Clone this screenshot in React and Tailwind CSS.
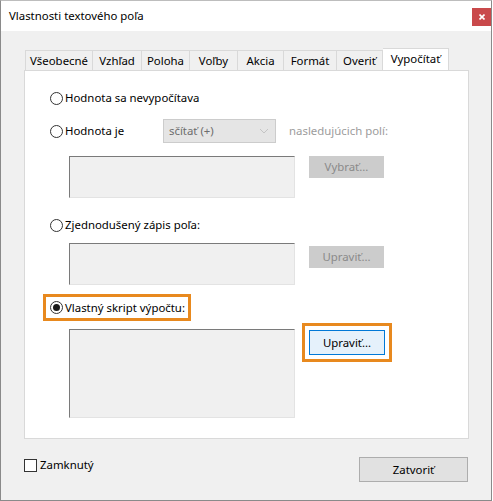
import React from "react";

const TABS = [
  { label: "Všeobecné", w: "w-[68px]" },
  { label: "Vzhľad", w: "w-[49px]" },
  { label: "Poloha", w: "w-[48px]" },
  { label: "Voľby", w: "w-[48px]" },
  { label: "Akcia", w: "w-[46px]" },
  { label: "Formát", w: "w-[53px]" },
  { label: "Overiť", w: "w-[46px]" },
];

const Radio = ({ checked }) => (
  <span className="flex h-[13px] w-[13px] shrink-0 items-center justify-center rounded-full border border-[#333] bg-white">
    {checked && <span className="h-[7px] w-[7px] rounded-full bg-[#1a1a1a]" />}
  </span>
);

const Sunken = ({ h }) => (
  <div
    className={`w-[226px] ${h} shrink-0 border-t border-l border-r border-b border-t-[#7a7a7a] border-l-[#7a7a7a] border-r-[#e3e3e3] border-b-[#e3e3e3] bg-[#f0f0f0]`}
  />
);

const DisabledButton = ({ children }) => (
  <div className="flex h-[22px] w-[75px] items-center justify-center bg-[#cccccc] text-[#8a8a8a]">
    {children}
  </div>
);

const App = () => {
  return (
    <div
      className="h-[501px] w-[493px] overflow-hidden whitespace-nowrap bg-white text-[11.4px] text-black"
      style={{ fontFamily: '"Segoe UI", "Noto Sans", sans-serif' }}
    >
      <div className="flex h-[501px] w-[492px] flex-col border border-[#8a8a8a] border-t-[#bdbdbd] bg-[#f0f0f0]">
        {/* Title bar */}
        <div className="flex h-[30px] shrink-0 items-start justify-between bg-white">
          <span className="mt-[6px] pl-[8px]">Vlastnosti textového poľa</span>
          <div className="mt-[7px] flex h-[18px] w-[19px] items-center justify-center bg-[#c9494b]">
            <svg width="6" height="6" viewBox="0 0 6 6">
              <path d="M0.5 0.5L5.5 5.5M5.5 0.5L0.5 5.5" stroke="#fff" strokeWidth="1.6" />
            </svg>
          </div>
        </div>

        {/* Body */}
        <div className="flex flex-col pl-[23px] pr-[23px]">
          {/* Tabs */}
          <div className="mt-[17px] flex h-[22px] items-end pl-[1px]">
            {TABS.map((t) => (
              <div
                key={t.label}
                className={`${t.w} flex h-[20px] shrink-0 items-center justify-center border border-b-0 border-l-0 border-[#d9d9d9] bg-[#f0f0f0] first:border-l`}
              >
                {t.label}
              </div>
            ))}
            <div className="-mb-[1px] flex h-[23px] w-[66px] shrink-0 items-start justify-center border border-b-0 border-l-0 border-[#d9d9d9] bg-white pt-[1px]">
              Vypočítať
            </div>
          </div>

          {/* Panel */}
          <div className="flex h-[369px] w-[445px] flex-col border border-[#d9d9d9] bg-white">
            <div className="mt-[19px] flex h-[16px] items-center gap-[2px] pl-[25px]">
              <Radio />
              <span>Hodnota sa nevypočítava</span>
            </div>

            <div className="mt-[13px] flex h-[24px] items-center pl-[25px]">
              <Radio />
              <span className="ml-[2px] w-[98px]">Hodnota je</span>
              <div className="flex h-[24px] w-[113px] items-center border border-[#cccccc] bg-[#e5e5e5]">
                <span className="ml-[5px] flex-1 text-[#6d6d6d]">sčítať (+)</span>
                <svg width="10" height="6" viewBox="0 0 10 6" className="mr-[6px]">
                  <path d="M1 1L5 5L9 1" fill="none" stroke="#c4c4c4" strokeWidth="1" />
                </svg>
              </div>
              <span className="ml-[13px] text-[#9c9c9c]">nasledujúcich polí:</span>
            </div>

            <div className="mt-[13px] flex items-start gap-[14px] pl-[44px]">
              <Sunken h="h-[42px]" />
              <DisabledButton>Vybrať...</DisabledButton>
            </div>

            <div className="mt-[19px] flex h-[16px] items-center gap-[2px] pl-[25px]">
              <Radio />
              <span>Zjednodušený zápis poľa:</span>
            </div>

            <div className="mt-[10px] flex items-start gap-[14px] pl-[44px]">
              <Sunken h="h-[42px]" />
              <div className="mt-[3px]">
                <DisabledButton>Upraviť...</DisabledButton>
              </div>
            </div>

            <div className="ml-[18px] mt-[9px] flex h-[27px] w-[148px] items-center gap-[2px] border-[3px] border-[#e8891e] pl-[4px]">
              <Radio checked />
              <span>Vlastný skript výpočtu:</span>
            </div>

            <div className="mt-[8px] flex items-start pl-[44px]">
              <Sunken h="h-[89px]" />
              <div className="-mt-[6px] ml-[7px] flex h-[39px] w-[90px] items-center justify-center border-[3px] border-[#e8891e]">
                <div className="flex h-[25px] w-[76px] items-center justify-center border border-[#0078d7] bg-[#e5f1fb]">
                  Upraviť...
                </div>
              </div>
            </div>
          </div>

          {/* Bottom row */}
          <div className="mt-[18px] flex items-start justify-between">
            <div className="mt-[1px] flex items-center gap-[3px]">
              <span className="h-[13px] w-[13px] border border-[#333] bg-white" />
              <span className="-mt-[2px]">Zamknutý</span>
            </div>
            <div className="flex h-[25px] w-[109px] items-center justify-center border border-[#adadad] bg-[#e1e1e1]">
              Zatvoriť
            </div>
          </div>
        </div>
      </div>
    </div>
  );
};

export default App;
